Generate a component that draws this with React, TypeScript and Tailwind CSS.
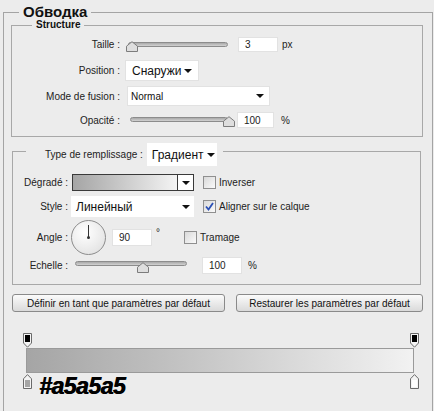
import React from "react";

const Arrow = () => (
  <svg width="8" height="4" viewBox="0 0 8 4" className="block">
    <path d="M0 0H8L4 4Z" fill="#111" />
  </svg>
);

const Thumb = () => (
  <svg width="12" height="11" viewBox="0 0 12 11" className="block">
    <path d="M0.5 10.5V5.2L6 0.7L11.5 5.2V10.5Z" fill="#dedede" stroke="#7c7c7c" />
  </svg>
);

const Track = ({ className }: { className: string }) => (
  <div
    className={`absolute h-[5px] rounded-[3px] border border-[#8c8c8c] bg-gradient-to-b from-[#a9a9a9] to-[#d2d2d2] ${className}`}
  />
);

const Check = ({ checked }: { checked?: boolean }) => (
  <div className="w-[13px] h-[13px] border border-[#8f8f8f] bg-gradient-to-br from-[#d9d9d9] to-[#fafafa] flex items-center justify-center shrink-0">
    {checked && (
      <svg width="9" height="9" viewBox="0 0 9 9" className="block">
        <path d="M1 4.5L3.5 7.5L8 1" fill="none" stroke="#2a4fb5" strokeWidth="1.8" />
      </svg>
    )}
  </div>
);

const Input = ({ v, className }: { v: string; className: string }) => (
  <div className={`bg-white border border-[#e2e2e2] flex items-center pl-[6px] text-[10px] text-[#222] shrink-0 ${className}`}>
    {v}
  </div>
);

const TopStop = () => (
  <svg width="9" height="15" viewBox="0 0 9 15" className="block">
    <path d="M0.5 0.5H8.5V10L4.5 14.2L0.5 10Z" fill="#f4f4f4" stroke="#6a6a6a" />
    <rect x="2" y="2" width="5" height="7" fill="#000" />
  </svg>
);

const BottomStop = ({ fill }: { fill: string }) => (
  <svg width="9" height="15" viewBox="0 0 9 15" className="block">
    <path d="M0.5 14.5V4.8L4.5 0.6L8.5 4.8V14.5Z" fill="#f4f4f4" stroke="#6a6a6a" />
    <rect x="2" y="6" width="5" height="7" fill={fill} />
  </svg>
);

export default function App() {
  return (
    <div className="w-[434px] h-[411px] overflow-hidden bg-[#ececec] pt-[12px] font-['Liberation_Sans',Arial,sans-serif] text-[10px] text-[#222]">
      <div className="relative ml-[3px] w-[430px] h-[420px] border border-[#a4a4a4]">
        <div className="absolute left-[15px] top-[-11px] px-[4px] bg-[#ececec] text-[15px] leading-[20px] font-bold text-[#111]">
          Обводка
        </div>

        {/* Structure */}
        <div className="relative mt-[12px] ml-[7px] w-[412px] h-[112px] border border-[#a8a8a8]">
          <div className="absolute left-[20px] top-[-7px] px-[4px] bg-[#ececec] text-[10px] leading-[12px] font-bold text-[#111]">
            Structure
          </div>

          <div className="mt-[11px] h-[15px] flex items-center">
            <div className="w-[108px] text-right">Taille :</div>
            <div className="relative ml-[5px] w-[104px] h-[15px]">
              <Track className="left-[3px] right-[1px] top-[5px]" />
              <div className="absolute left-[1px] top-[4px]">
                <Thumb />
              </div>
            </div>
            <Input v="3" className="ml-[9px] w-[40px] h-[15px]" />
            <div className="ml-[4px]">px</div>
          </div>

          <div className="mt-[8px] h-[21px] flex items-center">
            <div className="w-[108px] text-right">Position :</div>
            <div className="ml-[5px] w-[74px] h-[21px] bg-white border border-[#e2e2e2] flex items-center pl-[6px] pr-[6px] justify-between">
              <span className="text-[12px] text-[#111]">Снаружи</span>
              <Arrow />
            </div>
          </div>

          <div className="mt-[5px] h-[20px] flex items-center">
            <div className="w-[108px] text-right">Mode de fusion :</div>
            <div className="ml-[7px] w-[143px] h-[20px] bg-white border border-[#e2e2e2] flex items-center pl-[3px] pr-[5px] justify-between">
              <span className="text-[10px] text-[#111]">Normal</span>
              <Arrow />
            </div>
          </div>

          <div className="mt-[6px] h-[16px] flex items-center">
            <div className="w-[108px] text-right">Opacité :</div>
            <div className="relative ml-[10px] w-[106px] h-[16px]">
              <Track className="left-0 w-[98px] top-[5px]" />
              <div className="absolute left-[93px] top-[4px]">
                <Thumb />
              </div>
            </div>
            <Input v="100" className="ml-[1px] w-[37px] h-[16px]" />
            <div className="ml-[7px]">%</div>
          </div>
        </div>

        {/* Fill group */}
        <div className="relative mt-[14px] ml-[8px] w-[409px] h-[134px] border border-[#a8a8a8]">
          <div className="absolute left-[13px] top-[-9px] pl-[19px] pr-[6px] bg-[#ececec] flex items-center">
            <span>Type de remplissage :</span>
            <div className="ml-[4px] w-[70px] h-[23px] bg-white flex items-center pl-[5px] pr-[2px] justify-between">
              <span className="text-[12px] text-[#111]">Градиент</span>
              <Arrow />
            </div>
          </div>

          <div className="mt-[22px] h-[17px] flex items-center">
            <div className="w-[55px] text-right">Dégradé :</div>
            <div className="ml-[4px] w-[122px] h-[17px] border border-[#3a3a3a] flex">
              <div className="flex-1 bg-gradient-to-r from-[#a5a5a5] to-[#f4f4f4]" />
              <div className="w-[16px] border-l border-[#3a3a3a] bg-white flex items-center justify-center">
                <Arrow />
              </div>
            </div>
            <div className="ml-[9px]">
              <Check />
            </div>
            <div className="ml-[3px]">Inverser</div>
          </div>

          <div className="mt-[5px] h-[21px] flex items-center">
            <div className="w-[55px] text-right">Style :</div>
            <div className="ml-[3px] w-[123px] h-[21px] bg-white flex items-center pl-[5px] pr-[4px] justify-between">
              <span className="text-[12px] text-[#111]">Линейный</span>
              <Arrow />
            </div>
            <div className="ml-[9px]">
              <Check checked />
            </div>
            <div className="ml-[3px]">Aligner sur le calque</div>
          </div>

          <div className="mt-[3px] h-[35px] flex items-center">
            <div className="w-[55px] text-right">Angle :</div>
            <div className="relative ml-[3px] w-[35px] h-[35px] rounded-full border border-[#8c8c8c] bg-[radial-gradient(circle_at_40%_35%,#ffffff,#dcdcdc)] shrink-0">
              <div className="absolute left-[16px] top-[4px] w-[1px] h-[13px] bg-[#333]" />
              <div className="absolute left-[15px] top-[15px] w-[3px] h-[3px] rounded-full bg-[#333]" />
            </div>
            <Input v="90" className="ml-[6px] w-[40px] h-[17px]" />
            <div className="ml-[4px] self-start mt-[8px] leading-[10px]">°</div>
            <div className="ml-[24px]">
              <Check />
            </div>
            <div className="ml-[3px]">Tramage</div>
          </div>

          <div className="mt-[2px] h-[17px] flex items-center">
            <div className="w-[55px] text-right">Echelle :</div>
            <div className="relative ml-[7px] w-[112px] h-[17px]">
              <Track className="left-0 right-0 top-[4px]" />
              <div className="absolute left-[62px] top-[5px]">
                <Thumb />
              </div>
            </div>
            <Input v="100" className="ml-[15px] w-[40px] h-[17px]" />
            <div className="ml-[6px]">%</div>
          </div>
        </div>

        {/* Buttons */}
        <div className="mt-[9px] ml-[8px] flex gap-[11px]">
          <div className="w-[213px] h-[18px] rounded-[3px] border border-[#8a8a8a] bg-gradient-to-b from-[#fbfbfb] to-[#dadada] flex items-center justify-center text-[#111]">
            Définir en tant que paramètres par défaut
          </div>
          <div className="w-[187px] h-[18px] rounded-[3px] border border-[#8a8a8a] bg-gradient-to-b from-[#fbfbfb] to-[#dadada] flex items-center justify-center text-[#111]">
            Restaurer les paramètres par défaut
          </div>
        </div>

        {/* Gradient editor */}
        <div className="mt-[21px] ml-[19px] w-[396px]">
          <div className="h-[15px] flex justify-between">
            <TopStop />
            <TopStop />
          </div>
          <div className="ml-[3px] w-[388px] h-[25px] border border-[#9a9a9a] bg-gradient-to-r from-[#a5a5a5] to-[#f2f2f2]" />
          <div className="mt-[1px] flex justify-between items-start">
            <div className="flex items-start">
              <BottomStop fill="#a5a5a5" />
              <div className="ml-[7px] mt-[1px] text-[23px] leading-[22px] font-bold italic tracking-[-0.5px] text-black [text-shadow:0.7px_0_0_#000]">
                #a5a5a5
              </div>
            </div>
            <BottomStop fill="#ffffff" />
          </div>
        </div>
      </div>
    </div>
  );
}
